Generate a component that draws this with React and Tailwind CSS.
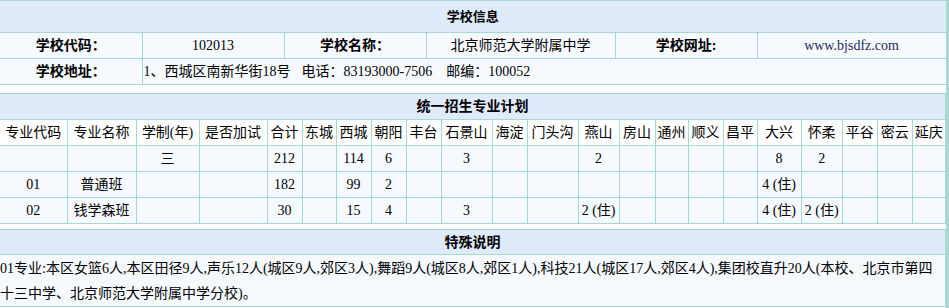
import React from "react";

const font = "font-['Liberation_Serif','Noto_Sans_CJK_SC',serif]";
const line = "border border-[#a8d8d0]";

const schoolInfo = {
  code: "102013",
  name: "北京师范大学附属中学",
  site: "www.bjsdfz.com",
  address: "1、西城区南新华街18号",
  phone: "83193000-7506",
  zip: "100052",
};

const districts = [
  "东城", "西城", "朝阳", "丰台", "石景山", "海淀", "门头沟", "燕山", "房山",
  "通州", "顺义", "昌平", "大兴", "怀柔", "平谷", "密云", "延庆",
];

const colWidths = [
  67, 69, 63, 68, 35, 34, 35, 35, 35, 51, 35, 51, 41, 36, 33, 35, 34, 44, 41, 35, 35, 33,
];

const plans = [
  { code: "", name: "", years: "三", extra: "", total: "212", d: { 西城: "114", 朝阳: "6", 石景山: "3", 燕山: "2", 大兴: "8", 怀柔: "2" } },
  { code: "01", name: "普通班", years: "", extra: "", total: "182", d: { 西城: "99", 朝阳: "2", 大兴: "4 (住)" } },
  { code: "02", name: "钱学森班", years: "", extra: "", total: "30", d: { 西城: "15", 朝阳: "4", 石景山: "3", 燕山: "2 (住)", 大兴: "4 (住)", 怀柔: "2 (住)" } },
];

const Cell = ({ children, first, className = "" }) => (
  <td className={`${line} ${first ? "border-l-0" : ""} p-0 text-center align-middle ${className}`}>
    {children}
  </td>
);

const SchoolInfo = () => (
  <table className="w-[946px] table-fixed border-collapse">
    <colgroup>
      <col className="w-[142px]" />
      <col className="w-[142px]" />
      <col className="w-[142px]" />
      <col className="w-[189px]" />
      <col className="w-[142px]" />
      <col className="w-[189px]" />
    </colgroup>
    <tbody>
      <tr className="bg-[#dfebfb]">
        <td colSpan={6} className={`${line} border-l-0 h-[32px] p-0 text-center text-[13px] font-bold`}>
          学校信息
        </td>
      </tr>
      <tr className="bg-[#f6faff] text-[14px]">
        <Cell first className="h-[26px] font-bold">学校代码：</Cell>
        <Cell>{schoolInfo.code}</Cell>
        <Cell className="font-bold">学校名称：</Cell>
        <Cell>{schoolInfo.name}</Cell>
        <Cell className="font-bold">学校网址:</Cell>
        <Cell className="text-[#1c2a5a]">{schoolInfo.site}</Cell>
      </tr>
      <tr className="bg-[#f6faff] text-[14px]">
        <Cell first className="h-[26px] font-bold">学校地址：</Cell>
        <td colSpan={5} className={`${line} p-0 pl-px text-left align-middle`}>
          {schoolInfo.address}
          <span className="ml-[11px]">电话：{schoolInfo.phone}</span>
          <span className="ml-[14px]">邮编：{schoolInfo.zip}</span>
        </td>
      </tr>
    </tbody>
  </table>
);

const PlanTable = () => (
  <table className="w-[946px] table-fixed border-collapse text-[14px]">
    <colgroup>
      {colWidths.map((w, i) => (
        <col key={i} style={{ width: w }} />
      ))}
    </colgroup>
    <tbody>
      <tr className="bg-[#dfebfb]">
        <td colSpan={22} className={`${line} border-l-0 h-[26px] p-0 text-center font-bold`}>
          统一招生专业计划
        </td>
      </tr>
      <tr className="bg-white">
        <Cell first className="h-[26px]">专业代码</Cell>
        <Cell>专业名称</Cell>
        <Cell>学制(年)</Cell>
        <Cell>是否加试</Cell>
        <Cell>合计</Cell>
        {districts.map((d) => (
          <Cell key={d}>{d}</Cell>
        ))}
      </tr>
      {plans.map((p, i) => (
        <tr key={i} className="bg-[#f6faff]">
          <Cell first className="h-[26px]">{p.code}</Cell>
          <Cell>{p.name}</Cell>
          <Cell>{p.years}</Cell>
          <Cell>{p.extra}</Cell>
          <Cell>{p.total}</Cell>
          {districts.map((d) => (
            <Cell key={d} className="whitespace-nowrap">{p.d[d] || ""}</Cell>
          ))}
        </tr>
      ))}
    </tbody>
  </table>
);

const NoteTable = () => (
  <table className="w-[946px] table-fixed border-collapse text-[14px]">
    <tbody>
      <tr className="bg-[#dfebfb]">
        <td className={`${line} border-l-0 h-[25px] p-0 text-center font-bold`}>特殊说明</td>
      </tr>
      <tr className="bg-[#f6faff]">
        <td className={`${line} border-l-0 p-0 pt-px leading-[25px] text-left`}>
          01专业:本区女篮6人,本区田径9人,声乐12人(城区9人,郊区3人),舞蹈9人(城区8人,郊区1人),科技21人(城区17人,郊区4人),集团校直升20人(本校、北京市第四
          <br />
          十三中学、北京师范大学附属中学分校)。
        </td>
      </tr>
    </tbody>
  </table>
);

export default function App() {
  return (
    <div className={`w-[949px] h-[308px] overflow-hidden bg-white border-r-[3px] border-[#a8d8d0] text-black ${font}`}>
      <SchoolInfo />
      <div className="h-[8px]" />
      <PlanTable />
      <div className="h-[5px]" />
      <NoteTable />
    </div>
  );
}
